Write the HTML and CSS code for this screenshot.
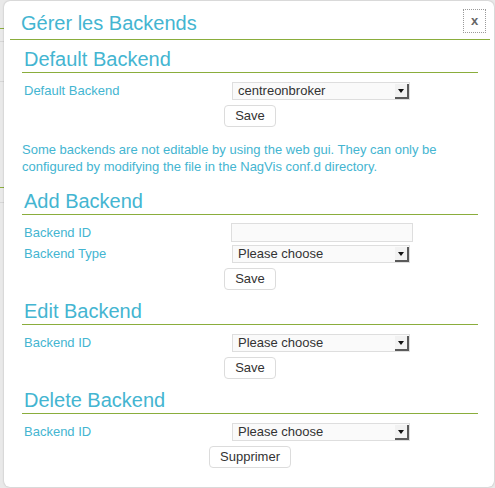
FILE: index.html
```html
<!DOCTYPE html>
<html lang="fr">
<head>
<meta charset="utf-8">
<title>Gérer les Backends</title>
<link rel="stylesheet" href="styles.css">
</head>
<body>
<div class="dialog">
  <div class="dialog-header">
    <h1 class="dialog-title">Gérer les Backends</h1>
    <button class="close-btn" type="button">x</button>
  </div>
  <div class="dialog-body">
    <section class="section">
      <h2 class="section-title">Default Backend</h2>
      <div class="form-row">
        <label class="form-label">Default Backend</label>
        <span class="select-wrap"><select class="form-select"><option>centreonbroker</option></select><span class="select-arrow"></span></span>
      </div>
      <div class="form-actions"><button class="btn" type="button">Save</button></div>
    </section>

    <p class="note">Some backends are not editable by using the web gui. They can only be configured by modifying the file in the NagVis conf.d directory.</p>

    <section class="section">
      <h2 class="section-title">Add Backend</h2>
      <div class="form-row">
        <label class="form-label">Backend ID</label>
        <input class="form-input" type="text">
      </div>
      <div class="form-row">
        <label class="form-label">Backend Type</label>
        <span class="select-wrap"><select class="form-select"><option>Please choose</option></select><span class="select-arrow"></span></span>
      </div>
      <div class="form-actions"><button class="btn" type="button">Save</button></div>
    </section>

    <section class="section">
      <h2 class="section-title">Edit Backend</h2>
      <div class="form-row">
        <label class="form-label">Backend ID</label>
        <span class="select-wrap"><select class="form-select"><option>Please choose</option></select><span class="select-arrow"></span></span>
      </div>
      <div class="form-actions"><button class="btn" type="button">Save</button></div>
    </section>

    <section class="section">
      <h2 class="section-title">Delete Backend</h2>
      <div class="form-row">
        <label class="form-label">Backend ID</label>
        <span class="select-wrap"><select class="form-select"><option>Please choose</option></select><span class="select-arrow"></span></span>
      </div>
      <div class="form-actions"><button class="btn" type="button">Supprimer</button></div>
    </section>
  </div>
</div>
</body>
</html>
```

FILE: styles.css
```css
html, body {
  margin: 0;
  padding: 0;
}

body {
  width: 495px;
  height: 488px;
  overflow: hidden;
  font-family: "Liberation Sans", Arial, sans-serif;
  font-size: 13px;
  background-color: #e9e9e9;
  background-image:
    linear-gradient(#8aad3c, #8aad3c),
    linear-gradient(#d6d6d6, #d6d6d6),
    linear-gradient(#d6d6d6, #d6d6d6),
    linear-gradient(#8aad3c, #8aad3c),
    linear-gradient(#d6d6d6, #d6d6d6);
  background-repeat: no-repeat;
  background-size: 4px 1px;
  background-position: 0 28px, 0 41px, 0 81px, 0 187px, 0 202px;
  padding-top: 1px;
  box-sizing: border-box;
}

.dialog {
  margin-left: 4px;
  width: 490px;
  height: 486px;
  background: #fff;
  border-radius: 6px;
  box-shadow: 0 0 2px rgba(0, 0, 0, 0.25);
  overflow: hidden;
}

.dialog-header {
  display: flex;
  justify-content: space-between;
  align-items: flex-start;
  height: 38px;
  margin: 0 4px 0 6px;
  border-bottom: 1px solid #8aad3c;
}

.dialog-title {
  margin: 0;
  padding: 10px 0 0 11px;
  font-size: 20px;
  line-height: 24px;
  font-weight: normal;
  color: #44b5d1;
}

.close-btn {
  margin: 8px 4px 0 0;
  width: 23px;
  height: 24px;
  padding: 0;
  border: 1px dotted #9a9a9a;
  background: #fff;
  color: #666;
  font-family: "Liberation Sans", Arial, sans-serif;
  font-size: 13px;
  font-weight: bold;
  line-height: 20px;
}

.dialog-body {
  padding: 7px 16px 0 18px;
}

.section-title {
  margin: 9px 0 8px;
  padding-left: 2px;
  font-size: 20px;
  line-height: 25px;
  font-weight: normal;
  color: #44b5d1;
  border-bottom: 1px solid #8aad3c;
}

.section:first-child .section-title {
  margin-top: 0;
}

.form-row {
  display: grid;
  grid-template-columns: 210px 1fr;
  align-items: center;
  height: 18px;
  margin-bottom: 3px;
}

.form-label {
  padding-left: 2px;
  color: #44b5d1;
  line-height: 18px;
  padding-top: 1px;
}

.select-wrap {
  position: relative;
  display: block;
  width: 178px;
  height: 18px;
}

.form-select {
  appearance: none;
  -webkit-appearance: none;
  display: block;
  width: 178px;
  height: 18px;
  margin: 0;
  padding: 0 0 0 5px;
  border: 1px solid #dedede;
  border-radius: 0;
  background: #fafafa;
  color: #333;
  font-family: "Liberation Sans", Arial, sans-serif;
  font-size: 13px;
  line-height: 16px;
}

.select-arrow {
  position: absolute;
  top: 2px;
  right: 1px;
  width: 12px;
  height: 13px;
  background: #f2f2f2;
  border-right: 2px solid #5a5a5a;
  border-bottom: 2px solid #5a5a5a;
  pointer-events: none;
}

.select-arrow::after {
  content: "";
  position: absolute;
  left: 3px;
  top: 5px;
  border-left: 3px solid transparent;
  border-right: 3px solid transparent;
  border-top: 4px solid #111;
}

.form-input {
  display: block;
  box-sizing: border-box;
  width: 182px;
  height: 19px;
  margin: 0 0 0 -1px;
  padding: 0 4px;
  border: 1px solid #dedede;
  background: #fafafa;
  font-family: "Liberation Sans", Arial, sans-serif;
  font-size: 13px;
}

.form-actions {
  display: flex;
  justify-content: center;
  margin-top: 6px;
}

.btn {
  box-sizing: border-box;
  height: 22px;
  padding: 0 10px;
  border: 1px solid #dcdcdc;
  border-radius: 4px;
  background: #fff;
  color: #333;
  font-family: "Liberation Sans", Arial, sans-serif;
  font-size: 13px;
  line-height: 20px;
}

.note {
  margin: 14px 0 14px;
  padding-left: 0;
  color: #44b5d1;
  font-size: 13px;
  line-height: 17px;
}
```
